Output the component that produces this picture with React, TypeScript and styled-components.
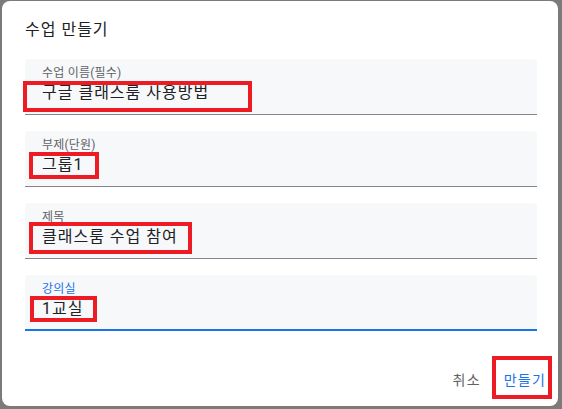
import React from "react";
import styled, { createGlobalStyle } from "styled-components";

const Global = createGlobalStyle`
  html, body { margin: 0; padding: 0; background: #7b7b7b; }
  body { font-family: Roboto, "Noto Sans CJK KR", sans-serif; width: 562px; height: 409px; overflow: hidden; }
`;

const Page = styled.div`
  width: 562px;
  height: 409px;
  box-sizing: border-box;
  padding: 1px 4px 3px 2px;
  position: relative;
`;

const Dialog = styled.div`
  background: #fff;
  border-radius: 8px;
  height: 100%;
  box-sizing: border-box;
  padding: 17px 21px 0 23px;
  display: flex;
  flex-direction: column;
`;

const Title = styled.h2`
  margin: 0 0 17px;
  font-size: 16px;
  font-weight: 400;
  line-height: 24px;
  letter-spacing: 1px;
  color: #202124;
`;

const Fields = styled.div`
  display: flex;
  flex-direction: column;
  gap: 16px;
`;

const Field = styled.div<{ $focused?: boolean }>`
  position: relative;
  height: 56px;
  box-sizing: border-box;
  background: #f7f8fa;
  border-radius: 4px 4px 0 0;
  border-bottom: ${(p) => (p.$focused ? "2px solid #1a73e8" : "1px solid #80868b")};
  padding: 6px 17px 0;
`;

const Label = styled.div<{ $focused?: boolean }>`
  font-size: 12px;
  line-height: 16px;
  letter-spacing: 0.2px;
  color: ${(p) => (p.$focused ? "#1a73e8" : "#5f6368")};
`;

const Value = styled.div`
  font-size: 16px;
  line-height: 24px;
  letter-spacing: 1px;
  color: #202124;
`;

const Mark = styled.div`
  position: absolute;
  box-sizing: border-box;
  border: 4px solid #ed1c24;
  pointer-events: none;
`;

const Actions = styled.div`
  margin-top: auto;
  display: flex;
  justify-content: flex-end;
  gap: 8px;
  padding: 0 0 9px;
  margin-right: -16px;
`;

const Button = styled.button<{ $primary?: boolean }>`
  position: relative;
  background: none;
  border: none;
  height: 36px;
  padding: 0 7px 0 8px;
  font-family: Roboto, "Noto Sans CJK KR", sans-serif;
  font-size: 14px;
  letter-spacing: 1.2px;
  color: ${(p) => (p.$primary ? "#1a73e8" : "#5f6368")};
  cursor: pointer;
`;

type F = { label: string; value: string; box: [number, number, number, number]; focused?: boolean };

const fields: F[] = [
  { label: "수업 이름(필수)", value: "구글 클래스룸 사용방법", box: [-2, 22, 229, 31] },
  { label: "부제(단원)", value: "그룹1", box: [4, 21, 70, 27] },
  { label: "제목", value: "클래스룸 수업 참여", box: [4, 19, 163, 32] },
  { label: "강의실", value: "1교실", box: [5, 21, 67, 26], focused: true },
];

export default function App() {
  return (
    <>
      <Global />
      <Page>
        <Dialog>
          <Title>수업 만들기</Title>
          <Fields>
            {fields.map((f) => (
              <Field key={f.label} $focused={f.focused}>
                <Label $focused={f.focused}>{f.label}</Label>
                <Value>{f.value}</Value>
                <Mark style={{ left: f.box[0], top: f.box[1], width: f.box[2], height: f.box[3] }} />
              </Field>
            ))}
          </Fields>
          <Actions>
            <Button>취소</Button>
            <Button $primary>
              만들기
              <Mark style={{ left: -4, top: -5, width: 60, height: 43 }} />
            </Button>
          </Actions>
        </Dialog>
      </Page>
    </>
  );
}
